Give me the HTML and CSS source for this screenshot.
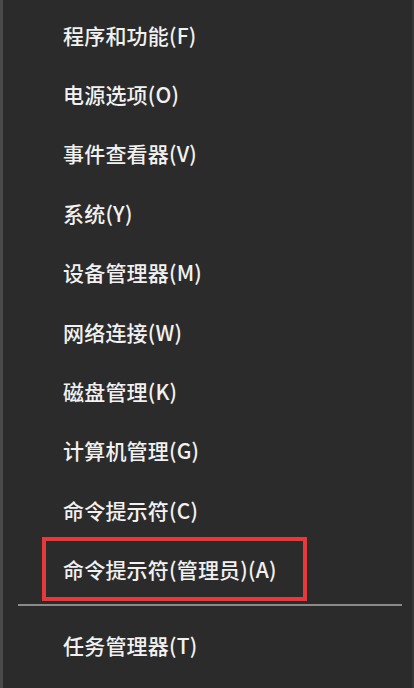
FILE: index.html
```html
<!DOCTYPE html>
<html lang="zh-CN">
<head>
  <meta charset="UTF-8" />
  <meta name="viewport" content="width=device-width, initial-scale=1.0" />
  <title>快速链接菜单</title>
  <link rel="stylesheet" href="styles.css">
</head>
<body>
  <div class="menu">
    <ul class="items">
      <li class="item">程序和功能(F)</li>
      <li class="item">电源选项(O)</li>
      <li class="item">事件查看器(V)</li>
      <li class="item">系统(Y)</li>
      <li class="item">设备管理器(M)</li>
      <li class="item">网络连接(W)</li>
      <li class="item">磁盘管理(K)</li>
      <li class="item">计算机管理(G)</li>
      <li class="item">命令提示符(C)</li>
      <li class="item"><span class="highlight">命令提示符(管理员)(A)</span></li>
    </ul>
    <div class="separator"></div>
    <ul class="items bottom">
      <li class="item">任务管理器(T)</li>
    </ul>
  </div>
</body>
</html>
```

FILE: styles.css
```css
* {
  box-sizing: border-box;
  margin: 0;
  padding: 0;
}
html, body {
  height: 100%;
}
body {
  background: #2b2b2b;
  font-family: "Noto Sans CJK SC", "Noto Sans", sans-serif;
  color: #f1f1f1;
  overflow: hidden;
}
.menu {
  height: 100%;
  border-left: 3px solid #4a4a4a;
  border-right: 2px solid #363636;
  padding-top: 5px;
}
.items {
  list-style: none;
}
.item {
  display: flex;
  align-items: center;
  height: 59.4px;
  padding-left: 60px;
  font-size: 21px;
  font-weight: 500;
  letter-spacing: 0.2px;
  white-space: nowrap;
}
.highlight {
  display: flex;
  align-items: center;
  height: 64px;
  margin-left: -21px;
  padding: 0 26px 0 17px;
  border: 4px solid #e5393c;
}
.separator {
  height: 2px;
  margin: 5px 10px 0 15px;
  background: #8a8a8a;
}
.bottom {
  margin-top: 9px;
}
```
